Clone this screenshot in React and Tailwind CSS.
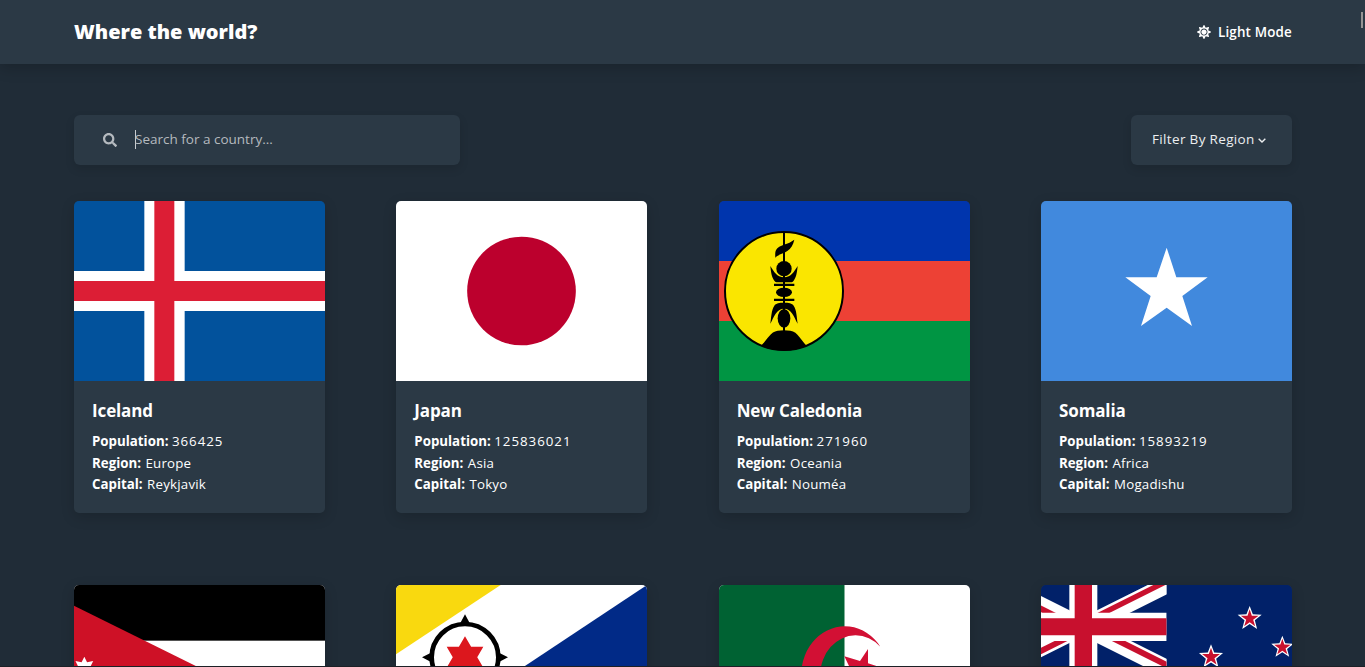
import { FaSearch, FaSun } from "react-icons/fa";
import { BiChevronDown } from "react-icons/bi";

function starPoints(cx, cy, outer, inner, tips = 5) {
  return Array.from({ length: tips * 2 }, (_, i) => {
    const r = i % 2 ? inner : outer;
    const a = (Math.PI * i) / tips;
    return `${(cx + r * Math.sin(a)).toFixed(2)},${(cy - r * Math.cos(a)).toFixed(2)}`;
  }).join(" ");
}

function Flag({ children }) {
  return (
    <svg viewBox="0 0 753 540" preserveAspectRatio="none" className="block h-[180px] w-full">
      {children}
    </svg>
  );
}

function Iceland() {
  return (
    <Flag>
      <rect width="753" height="540" fill="#02529c" />
      <path d="M211 0h121v540h-121zM0 210h753v120H0z" fill="#fff" />
      <path d="M241 0h60v540h-60zM0 240h753v60H0z" fill="#dc1e35" />
    </Flag>
  );
}

function Japan() {
  return (
    <Flag>
      <rect width="753" height="540" fill="#fff" />
      <circle cx="376.5" cy="270" r="163" fill="#bc002d" />
    </Flag>
  );
}

function NewCaledonia() {
  return (
    <Flag>
      <rect width="753" height="180" fill="#0035ad" />
      <rect y="180" width="753" height="180" fill="#ed4135" />
      <rect y="360" width="753" height="180" fill="#009543" />
      <g transform="translate(-12 -18)">
        <circle cx="207" cy="288" r="177" fill="#fae600" stroke="#000" strokeWidth="6" />
        <path d="M204 110h6v300h-6z" />
        <path d="M181 188c-2-26 4-30 25-39 14-4 22-8 32-15-4 16-10 26-21 34-12 9-24 8-36 20z" />
        <circle cx="207" cy="221" r="23" />
        <path d="M166 213c12 18 19 33 41 34 22-1 29-16 41-34-2 20-4 33-12 44-3 5-8 5-14 5h-30c-6 0-11 0-14-5-8-11-10-24-12-44z" />
        <path d="M177 266h61v7h-61zM177 311h61v7h-61z" />
        <ellipse cx="207" cy="292" rx="24" ry="14" />
        <path d="M166 386c3-20 3-41 12-54 5-8 15-9 29-9s24 1 29 9c9 13 9 34 12 54-11-20-18-45-41-45s-30 25-41 45z" />
        <ellipse cx="207" cy="370" rx="19" ry="28" />
        <path d="M137 452c18-14 28-42 51-45 13-2 25-2 38 0 23 3 33 31 49 45-42 20-96 20-138 0z" />
      </g>
    </Flag>
  );
}

function Somalia() {
  return (
    <Flag>
      <rect width="753" height="540" fill="#4189dd" />
      <polygon
        points="377,140 406,229 500,229 424,285 453,375 377,320 300,375 329,285 253,229 347,229"
        fill="#fff"
      />
    </Flag>
  );
}

function Jordan() {
  return (
    <Flag>
      <rect width="753" height="540" fill="#fff" />
      <rect width="753" height="167" fill="#000" />
      <rect y="374" width="753" height="166" fill="#007a3d" />
      <polygon points="0,62 420,270 0,478" fill="#ce1126" />
      <polygon points={starPoints(31, 249, 34, 19, 7)} fill="#fff" />
    </Flag>
  );
}

function Bonaire() {
  return (
    <Flag>
      <rect width="753" height="540" fill="#fff" />
      <polygon points="0,0 314,0 0,208" fill="#f9d90f" />
      <polygon points="753,0 388,242 -60,540 753,540" fill="#012a87" />
      <circle cx="207" cy="217" r="100" fill="none" stroke="#000" strokeWidth="14" />
      <path d="M207 88l14 26h-28zM336 217l-27 14v-28zM78 217l27-14v28z" />
      <path d="M207 154l55 94H152zM207 280l-55-95h110z" fill="#dc171d" />
    </Flag>
  );
}

function Algeria() {
  return (
    <Flag>
      <rect width="753" height="540" fill="#fff" />
      <rect width="376.5" height="540" fill="#006233" />
      <g transform="translate(-27 -30)" fill="#d21034">
        <path d="M511 215A131 146 0 1 0 511 385A106 119 0 1 1 511 215z" />
        <polygon points="474,222 474,265 518,279 500,300 518,321 474,335 474,378 450,342 403,356 430,300 403,244 450,258" />
      </g>
    </Flag>
  );
}

function NewZealand() {
  const stars = [
    [626, 101, 38],
    [724, 187, 35],
    [510, 216, 38],
    [626, 400, 42],
  ];
  return (
    <Flag>
      <rect width="753" height="540" fill="#012169" />
      <clipPath id="canton">
        <rect width="377" height="250" />
      </clipPath>
      <g clipPath="url(#canton)">
        <path d="M-173 -25L427 275M-173 275L427 -25" stroke="#fff" strokeWidth="51" />
        <g fill="#c8102e">
          <path d="M-123 0L127 125V145L-123 20z" />
          <path d="M377 250L127 125V105L377 230z" />
          <path d="M-123 250L127 125V144L-123 269z" />
          <path d="M377 -2L127 123V105L377 -20z" />
        </g>
        <path d="M85 0h84v250H85zM0 83h377v85H0z" fill="#fff" />
        <path d="M101 0h52v250h-52zM0 100h377v51H0z" fill="#c8102e" />
      </g>
      {stars.map(([x, y, r]) => (
        <g key={`${x}-${y}`}>
          <polygon points={starPoints(x, y, r, r * 0.43)} fill="#fff" />
          <polygon points={starPoints(x, y, r * 0.74, r * 0.29)} fill="#c8102e" />
        </g>
      ))}
    </Flag>
  );
}

const countries = [
  { name: "Iceland", population: 366425, region: "Europe", capital: "Reykjavik", flag: Iceland },
  { name: "Japan", population: 125836021, region: "Asia", capital: "Tokyo", flag: Japan },
  { name: "New Caledonia", population: 271960, region: "Oceania", capital: "Nouméa", flag: NewCaledonia },
  { name: "Somalia", population: 15893219, region: "Africa", capital: "Mogadishu", flag: Somalia },
  { name: "Jordan", flag: Jordan },
  { name: "Bonaire", flag: Bonaire },
  { name: "Algeria", flag: Algeria },
  { name: "New Zealand", flag: NewZealand },
];

function Fact({ label, value }) {
  const number = typeof value === "number";
  return (
    <p>
      <span className={number ? "font-bold" : "mr-px font-bold"}>{label}:</span>{" "}
      <span className={number ? "tracking-[0.98px]" : "tracking-[0.2px]"}>{value}</span>
    </p>
  );
}

function CountryCard({ country }) {
  const Picture = country.flag;
  return (
    <article className="h-[312px] w-[251px] overflow-hidden rounded-[5px] bg-[#2b3945] shadow-[0_4px_14px_rgba(0,0,0,0.16)]">
      <Picture />
      {country.capital && (
        <div className="px-[18px] pt-[17px]">
          <h2 className="text-[17px] leading-[26px] font-bold tracking-[-0.12px]">{country.name}</h2>
          <div className="mt-[7px] text-[13.3px] leading-[21.6px]">
            <Fact label="Population" value={country.population} />
            <Fact label="Region" value={country.region} />
            <Fact label="Capital" value={country.capital} />
          </div>
        </div>
      )}
    </article>
  );
}

export default function App() {
  return (
    <div className="relative h-[667px] overflow-hidden bg-[#202c37] font-['Open_Sans',sans-serif] text-white">
      <header className="flex h-16 items-center justify-between bg-[#2b3945] pr-[73px] pl-[74px] shadow-[0_4px_14px_rgba(0,0,0,0.2)]">
        <h1 className="text-[20px] leading-7 font-extrabold">Where the world?</h1>
        <button className="flex items-center gap-[7px] text-[13.4px] leading-5 font-semibold tracking-[0.18px]">
          <FaSun className="size-3.5" />
          Light Mode
        </button>
      </header>

      <main className="pt-[51px] pr-[73px] pl-[74px]">
        <div className="flex justify-between">
          <label className="flex h-[50px] w-[386px] items-center rounded-[6px] bg-[#2b3945] pl-[29px] text-[13.5px] text-[#b5babf] shadow-[0_4px_10px_rgba(0,0,0,0.12)]">
            <FaSearch className="size-3.5" />
            <span className="mb-px ml-[18px] h-[19px] w-px bg-[#c8ccd0]" />
            <span className="-ml-px pb-0.5 leading-5">Search for a country...</span>
          </label>
          <button className="flex h-[50px] w-[161px] items-center rounded-[6px] bg-[#2b3945] pl-[21px] text-[13.5px] tracking-[0.34px] text-[#eceef0] shadow-[0_4px_10px_rgba(0,0,0,0.12)]">
            <span className="w-[102px] pb-0.5 text-left leading-5 whitespace-nowrap">Filter By Region</span>
            <BiChevronDown className="size-4" />
          </button>
        </div>

        <section className="mt-9 grid grid-cols-[repeat(4,251px)] justify-between gap-y-[72px]">
          {countries.map((country) => (
            <CountryCard key={country.name} country={country} />
          ))}
        </section>
      </main>

      <div className="absolute top-3 right-0.5 h-4 w-0.5 bg-[#949494]" />
      <div className="absolute bottom-0 left-0 h-px w-full bg-[#1c2026]" />
    </div>
  );
}
